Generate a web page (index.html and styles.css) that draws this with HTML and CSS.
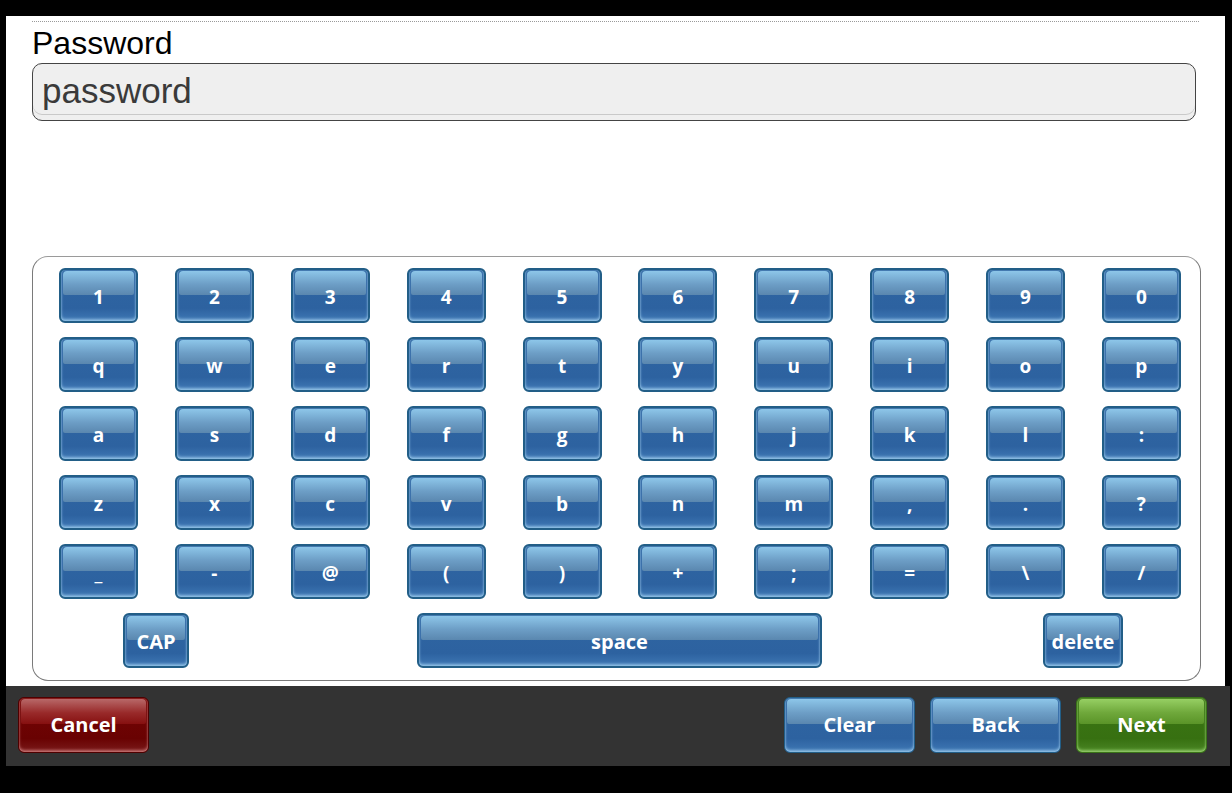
FILE: index.html
```html
<!DOCTYPE html>
<html lang="en">
<head>
    <meta charset="UTF-8">
    <meta name="viewport" content="width=device-width, initial-scale=1.0">
    <title>Password</title>
    <link rel="stylesheet" href="styles.css">
</head>
<body>
    <div class="screen">
        <div class="rule"></div>
        <label class="field-label" for="password">Password</label>
        <input class="field" type="text" id="password" value="password">

        <div class="keyboard">
            <div class="keys">
                <button class="key"><span>1</span></button>
                <button class="key"><span>2</span></button>
                <button class="key"><span>3</span></button>
                <button class="key"><span>4</span></button>
                <button class="key"><span>5</span></button>
                <button class="key"><span>6</span></button>
                <button class="key"><span>7</span></button>
                <button class="key"><span>8</span></button>
                <button class="key"><span>9</span></button>
                <button class="key"><span>0</span></button>

                <button class="key"><span>q</span></button>
                <button class="key"><span>w</span></button>
                <button class="key"><span>e</span></button>
                <button class="key"><span>r</span></button>
                <button class="key"><span>t</span></button>
                <button class="key"><span>y</span></button>
                <button class="key"><span>u</span></button>
                <button class="key"><span>i</span></button>
                <button class="key"><span>o</span></button>
                <button class="key"><span>p</span></button>

                <button class="key"><span>a</span></button>
                <button class="key"><span>s</span></button>
                <button class="key"><span>d</span></button>
                <button class="key"><span>f</span></button>
                <button class="key"><span>g</span></button>
                <button class="key"><span>h</span></button>
                <button class="key"><span>j</span></button>
                <button class="key"><span>k</span></button>
                <button class="key"><span>l</span></button>
                <button class="key"><span>:</span></button>

                <button class="key"><span>z</span></button>
                <button class="key"><span>x</span></button>
                <button class="key"><span>c</span></button>
                <button class="key"><span>v</span></button>
                <button class="key"><span>b</span></button>
                <button class="key"><span>n</span></button>
                <button class="key"><span>m</span></button>
                <button class="key"><span>,</span></button>
                <button class="key"><span>.</span></button>
                <button class="key"><span>?</span></button>

                <button class="key"><span>_</span></button>
                <button class="key"><span>-</span></button>
                <button class="key"><span>@</span></button>
                <button class="key"><span>(</span></button>
                <button class="key"><span>)</span></button>
                <button class="key"><span>+</span></button>
                <button class="key"><span>;</span></button>
                <button class="key"><span>=</span></button>
                <button class="key"><span>\</span></button>
                <button class="key"><span>/</span></button>
            </div>

            <div class="bottom-row">
                <button class="key key-cap"><span>CAP</span></button>
                <button class="key key-space"><span>space</span></button>
                <button class="key key-delete"><span>delete</span></button>
            </div>
        </div>
    </div>

    <div class="footer">
        <button class="key btn btn-red"><span>Cancel</span></button>
        <div class="footer-right">
            <button class="key btn"><span>Clear</span></button>
            <button class="key btn"><span>Back</span></button>
            <button class="key btn btn-green"><span>Next</span></button>
        </div>
    </div>
</body>
</html>
```

FILE: styles.css
```css
body {
    margin: 0;
    background: #000;
    font-family: "Liberation Sans", Arial, sans-serif;
}
.screen {
    margin: 16px 0 0 6px;
    width: 1219px;
    height: 670px;
    background: #fff;
    padding-left: 26px;
    box-sizing: border-box;
    overflow: hidden;
}
.rule {
    margin-top: 5px;
    width: 1167px;
    border-top: 1px dotted #9a9a9a;
}
.field-label {
    display: block;
    margin-top: 5px;
    font-size: 32px;
    line-height: 32px;
    color: #000;
}
.field {
    display: block;
    margin-top: 4px;
    width: 1164px;
    height: 58px;
    box-sizing: border-box;
    padding: 0 9px 3px;
    border: 1px solid #444;
    border-radius: 10px;
    background: #efefef;
    box-shadow: inset 0 -5px 0 #efefef, inset 0 -6px 0 #c9c9c9;
    font-family: "Liberation Sans", Arial, sans-serif;
    font-size: 35px;
    color: #3a3a3a;
    outline: none;
}
.keyboard {
    margin-top: 135px;
    width: 1169px;
    height: 425px;
    box-sizing: border-box;
    border: 1px solid #7a7a7a;
    border-top-color: #9a9a9a;
    border-radius: 16px;
    padding: 11px 0 0 26px;
}
.keys {
    display: grid;
    width: 1122px;
    grid-template-columns: repeat(10, 79px);
    grid-auto-rows: 55px;
    justify-content: space-between;
    row-gap: 14px;
}
.bottom-row {
    display: flex;
    height: 55px;
    margin-top: 14px;
}

/* glossy buttons */
.key {
    position: relative;
    box-sizing: border-box;
    height: 55px;
    padding: 2px 0 0;
    border: 2px solid #225e87;
    border-radius: 6px;
    background: linear-gradient(#2f66a2, #2d62a0 75%, #3f78b5);
    box-shadow: inset 0 -2px 3px rgba(170, 215, 245, 0.7), inset 0 0 2px rgba(170, 215, 245, 0.6);
    color: #fff;
    font-family: "Open Sans", "DejaVu Sans", sans-serif;
    font-weight: bold;
    font-size: 19px;
    cursor: pointer;
}
.key::before {
    content: "";
    position: absolute;
    top: 1px;
    left: 2px;
    right: 2px;
    height: 47%;
    border-radius: 4px 4px 2px 2px;
    background: linear-gradient(#8dc6e9, #6d9ec6 55%, #5a87af);
}
.key span {
    position: relative;
}
.key-cap {
    width: 66px;
    margin-left: 64px;
    font-size: 20px;
}
.key-space {
    width: 405px;
    margin-left: 228px;
    font-size: 20px;
}
.key-delete {
    width: 80px;
    margin-left: 221px;
    font-size: 20px;
}

.footer {
    margin-left: 6px;
    width: 1224px;
    height: 80px;
    background: #333;
    box-sizing: border-box;
    padding: 11px 23px 0 12px;
    display: flex;
    justify-content: space-between;
}
.footer-right {
    display: flex;
    gap: 15px;
}
.btn {
    width: 131px;
    height: 56px;
    padding: 0 0 2px;
    border-width: 1px;
    font-size: 20px;
}
.btn-red {
    border-color: #4e0000;
    background: linear-gradient(#760505, #690202 75%, #7a1a1a);
    box-shadow: inset 0 -2px 3px rgba(235, 160, 160, 0.6), inset 0 0 2px rgba(235, 160, 160, 0.5);
}
.btn-red::before {
    background: linear-gradient(#b86868, #992a2a 55%, #861010);
}
.btn-green {
    border-color: #3a7418;
    background: linear-gradient(#3b7614, #377011 75%, #4a8624);
    box-shadow: inset 0 -2px 3px rgba(170, 225, 130, 0.7), inset 0 0 2px rgba(170, 225, 130, 0.6);
}
.btn-green::before {
    background: linear-gradient(#96cf63, #6fa83b 55%, #5a9428);
}
```
